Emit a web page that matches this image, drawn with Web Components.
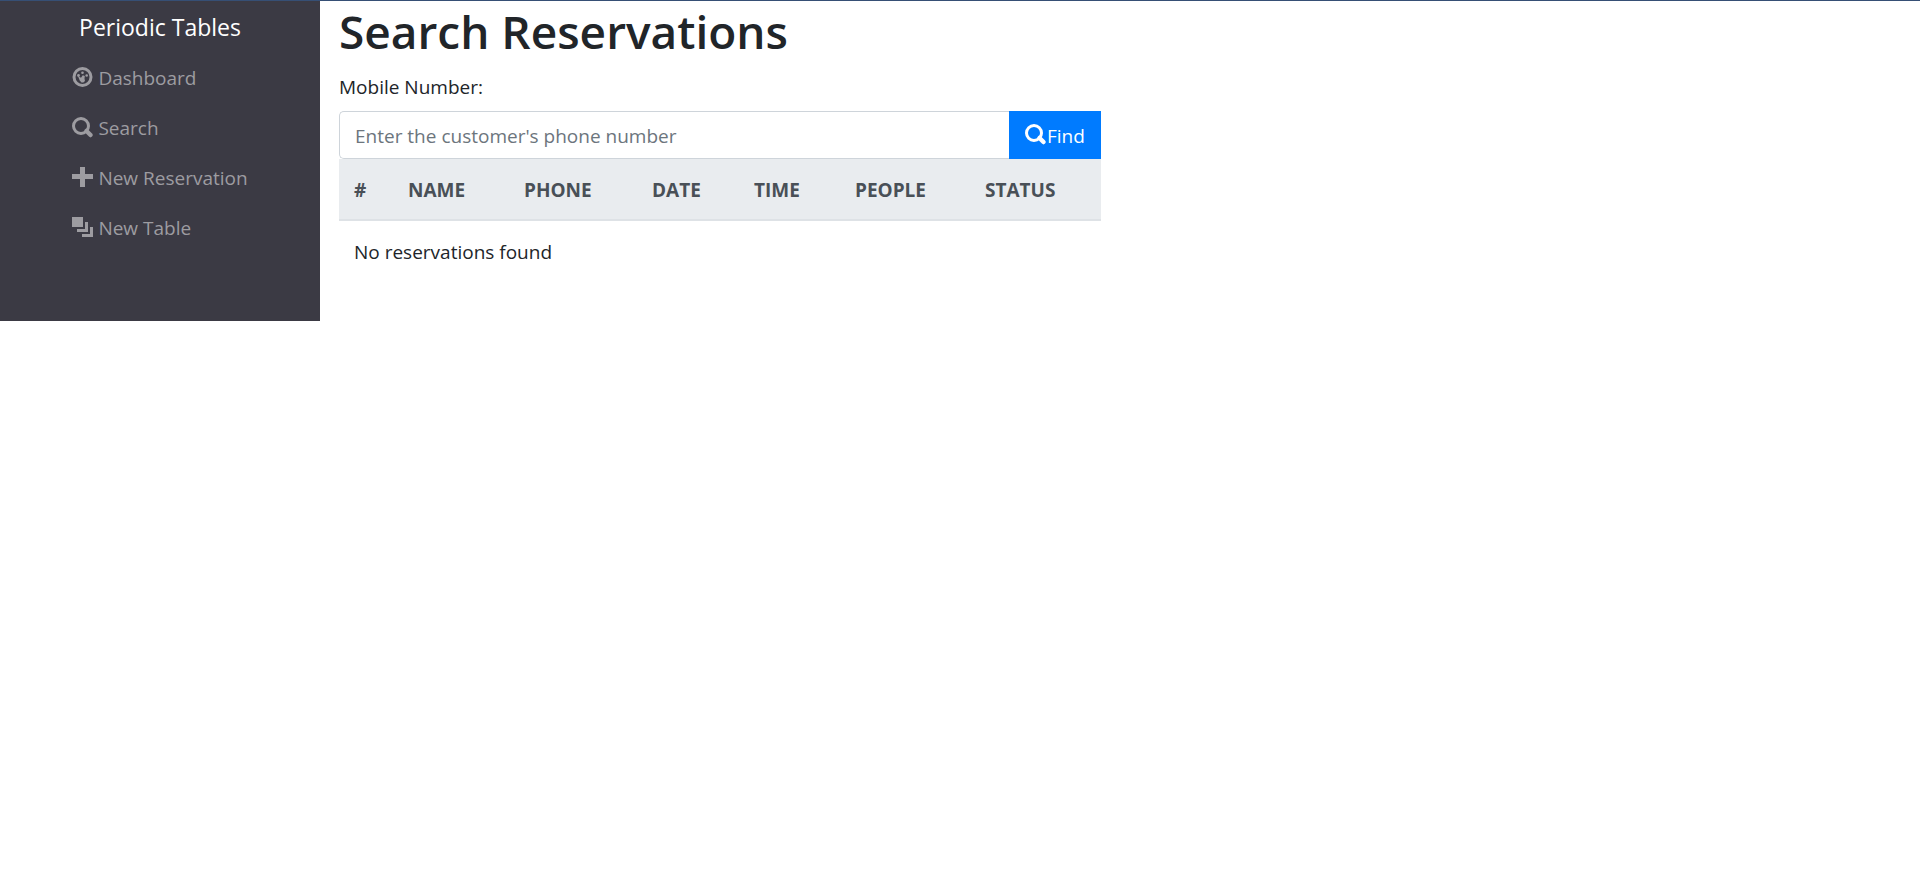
<!DOCTYPE html>
<html lang="en">
<head>
<meta charset="utf-8">
<title>Periodic Tables</title>
<style>
body { margin: 0; background: #fff; color: #212529; font: 19px/30px "Open Sans", "Noto Sans", sans-serif; }
</style>
</head>
<body>
<app-shell>
  <side-menu slot="menu">
    <menu-link icon="dashboard" href="#dashboard">Dashboard</menu-link>
    <menu-link icon="search" href="#search">Search</menu-link>
    <menu-link icon="plus" href="#reservations-new">New Reservation</menu-link>
    <menu-link icon="layers" href="#tables-new">New Table</menu-link>
  </side-menu>
  <search-form></search-form>
  <reservation-table></reservation-table>
</app-shell>
<script>
const icons = {
  dashboard: '<path fill-rule="evenodd" d="M10.500 0a10 10 0 1 0 0 20a10 10 0 1 0 0-20zM10.500 3a7 7 0 1 1 0 14a7 7 0 1 1 0-14z"/><circle cx="10.500" cy="5.800" r="1.300"/><circle cx="6.500" cy="8.500" r="1.400"/><circle cx="14.700" cy="8.500" r="1.300"/><path d="M6 9l3 1.700 1.800-2.400 2 .7-.3 2.700.5 2.300-1.700 1.500H9.500L7.700 13.500z"/>',
  search: '<circle cx="9" cy="9" r="7.500" fill="none" stroke="currentColor" stroke-width="3"/><path d="M14.500 14l4 4" stroke="currentColor" stroke-width="4.500" stroke-linecap="round"/>',
  plus: '<path d="M8 0h5v7h8v5h-8v8H8v-8H0V7h8z"/>',
  layers: '<path d="M0 0h11v10H0zM13 5h3v10H5v-3h8zM18 10h3v10H10v-3h8z"/>'
};
function render(host, markup) {
  const template = document.createElement('template');
  template.innerHTML = markup;
  host.attachShadow({ mode: 'open' }).append(template.content.cloneNode(true));
}
customElements.define('ui-icon', class extends HTMLElement {
  connectedCallback() {
    if (this.shadowRoot) return;
    render(this, `<style>
      :host { display: inline-block; width: 21px; height: 20px; }
      svg { display: block; fill: currentColor; overflow: visible; }
    </style><svg width="21" height="20" viewBox="0 0 21 20" aria-hidden="true">${icons[this.getAttribute('name')]}</svg>`);
  }
});
customElements.define('app-shell', class extends HTMLElement {
  constructor() {
    super();
    render(this, `<style>
      :host { display: flex; align-items: flex-start; border-top: 1px solid #364f75; }
      aside { flex: 0 0 320px; }
      main { flex: 1; min-width: 0; max-width: 762px; padding: 0 19px; }
    </style><aside><slot name="menu"></slot></aside><main><slot></slot></main>`);
  }
});
customElements.define('side-menu', class extends HTMLElement {
  constructor() {
    super();
    render(this, `<style>
      :host { display: flex; flex-direction: column; align-items: center; min-height: 320px; background: #3b3a44; }
      .brand { color: #fff; font-size: 23px; line-height: 30px; margin: 11px 0; text-decoration: none; }
      nav { display: flex; flex-direction: column; }
    </style><a class="brand" href="#home">Periodic Tables</a><nav><slot></slot></nav>`);
  }
});
customElements.define('menu-link', class extends HTMLElement {
  connectedCallback() {
    if (this.shadowRoot) return;
    render(this, `<style>
      :host { display: block; color: #9d9ca1; }
      a { display: flex; align-items: center; gap: 5px; height: 50px; color: inherit; text-decoration: none; }
      ui-icon { margin-bottom: 2px; }
    </style><a href="${this.getAttribute('href')}"><ui-icon name="${this.getAttribute('icon')}"></ui-icon><slot></slot></a>`);
  }
});
customElements.define('search-form', class extends HTMLElement {
  constructor() {
    super();
    render(this, `<style>
      :host { display: block; }
      h1 { margin: 0 0 11px; font-size: 46px; line-height: 60px; font-weight: 600; }
      label { display: block; margin-bottom: 9px; }
      .group { display: flex; }
      input { box-sizing: border-box; flex: 1; min-width: 0; height: 48px; padding: 2px 15px 0; border: 1px solid #ced4da; border-right: 0; border-radius: 5px 0 0 5px; font: inherit; color: #495057; }
      input::placeholder { color: #6c757d; opacity: 1; }
      button { display: flex; align-items: center; width: 92px; height: 48px; padding: 2px 16px 0; gap: 1px; border: 0; background: #007bff; color: #fff; font: inherit; }
      ui-icon { margin-bottom: 4px; }
    </style>
    <form>
      <h1>Search Reservations</h1>
      <label for="mobile">Mobile Number:</label>
      <div class="group">
        <input id="mobile" type="text" placeholder="Enter the customer's phone number">
        <button type="button"><ui-icon name="search"></ui-icon>Find</button>
      </div>
    </form>`);
  }
});
customElements.define('reservation-table', class extends HTMLElement {
  constructor() {
    super();
    const columns = [['#', 54], ['NAME', 116], ['PHONE', 128], ['DATE', 102], ['TIME', 101], ['PEOPLE', 130], ['STATUS', 131]];
    render(this, `<style>
      :host { display: block; }
      table { width: 100%; table-layout: fixed; border-collapse: separate; border-spacing: 0; }
      th, td { padding: 16px 15px; text-align: left; }
      th { padding-bottom: 14px; background: #e9ecef; color: #495057; border-bottom: 2px solid #dee2e6; font-weight: 700; }
    </style>
    <table>
      <colgroup>${columns.map(c => `<col style="width:${c[1]}px">`).join('')}</colgroup>
      <thead><tr>${columns.map(c => `<th scope="col">${c[0]}</th>`).join('')}</tr></thead>
      <tbody><tr><td colspan="7">No reservations found</td></tr></tbody>
    </table>`);
  }
});
</script>
</body>
</html>
